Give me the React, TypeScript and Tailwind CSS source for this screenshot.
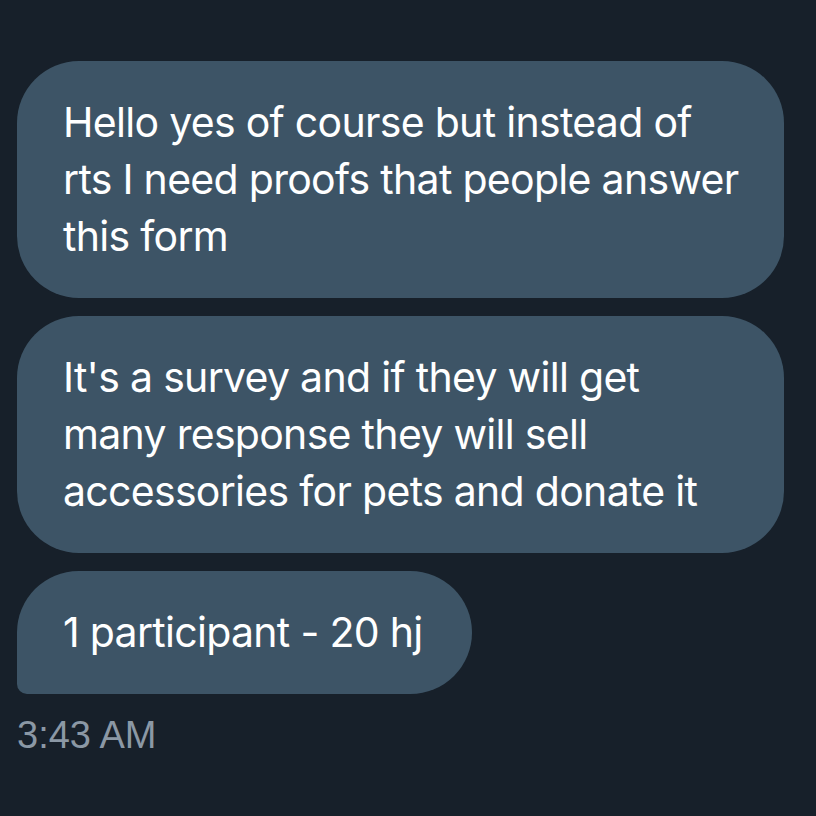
const messages: { lines: string[]; last?: boolean }[] = [
  { lines: ["Hello yes of course but instead of", "rts I need proofs that people answer", "this form"] },
  { lines: ["It's a survey and if they will get", "many response they will sell", "accessories for pets and donate it"] },
  { lines: ["1 participant - 20 hj"], last: true },
];

export default function App() {
  return (
    <div className="w-[816px] h-[816px] bg-[#17202a] pl-[17px] pt-[61px] overflow-hidden">
      <div className="flex flex-col items-start gap-[18px]">
        {messages.map((m, i) => (
          <div
            key={i}
            className={
              m.last
                ? "bg-[#3d5466] text-white rounded-[62px] rounded-bl-[10px] pl-[46px] pr-[50px] py-[33px] text-[41px] leading-[57px] font-['Inter',sans-serif] tracking-[-0.7px]"
                : "bg-[#3d5466] text-white rounded-[62px] w-[767px] pl-[46px] pr-[30px] py-[33px] text-[41px] leading-[57px] font-['Inter',sans-serif] tracking-[-0.7px]"
            }
          >
            {m.lines.map((l, j) => (
              <div key={j} className="whitespace-nowrap">
                {l}
              </div>
            ))}
          </div>
        ))}
      </div>
      <div className="mt-[20px] text-[38px] leading-[43px] text-[#8b98a5] font-['Liberation_Sans',Arial,sans-serif]">
        3:43 AM
      </div>
    </div>
  );
}
